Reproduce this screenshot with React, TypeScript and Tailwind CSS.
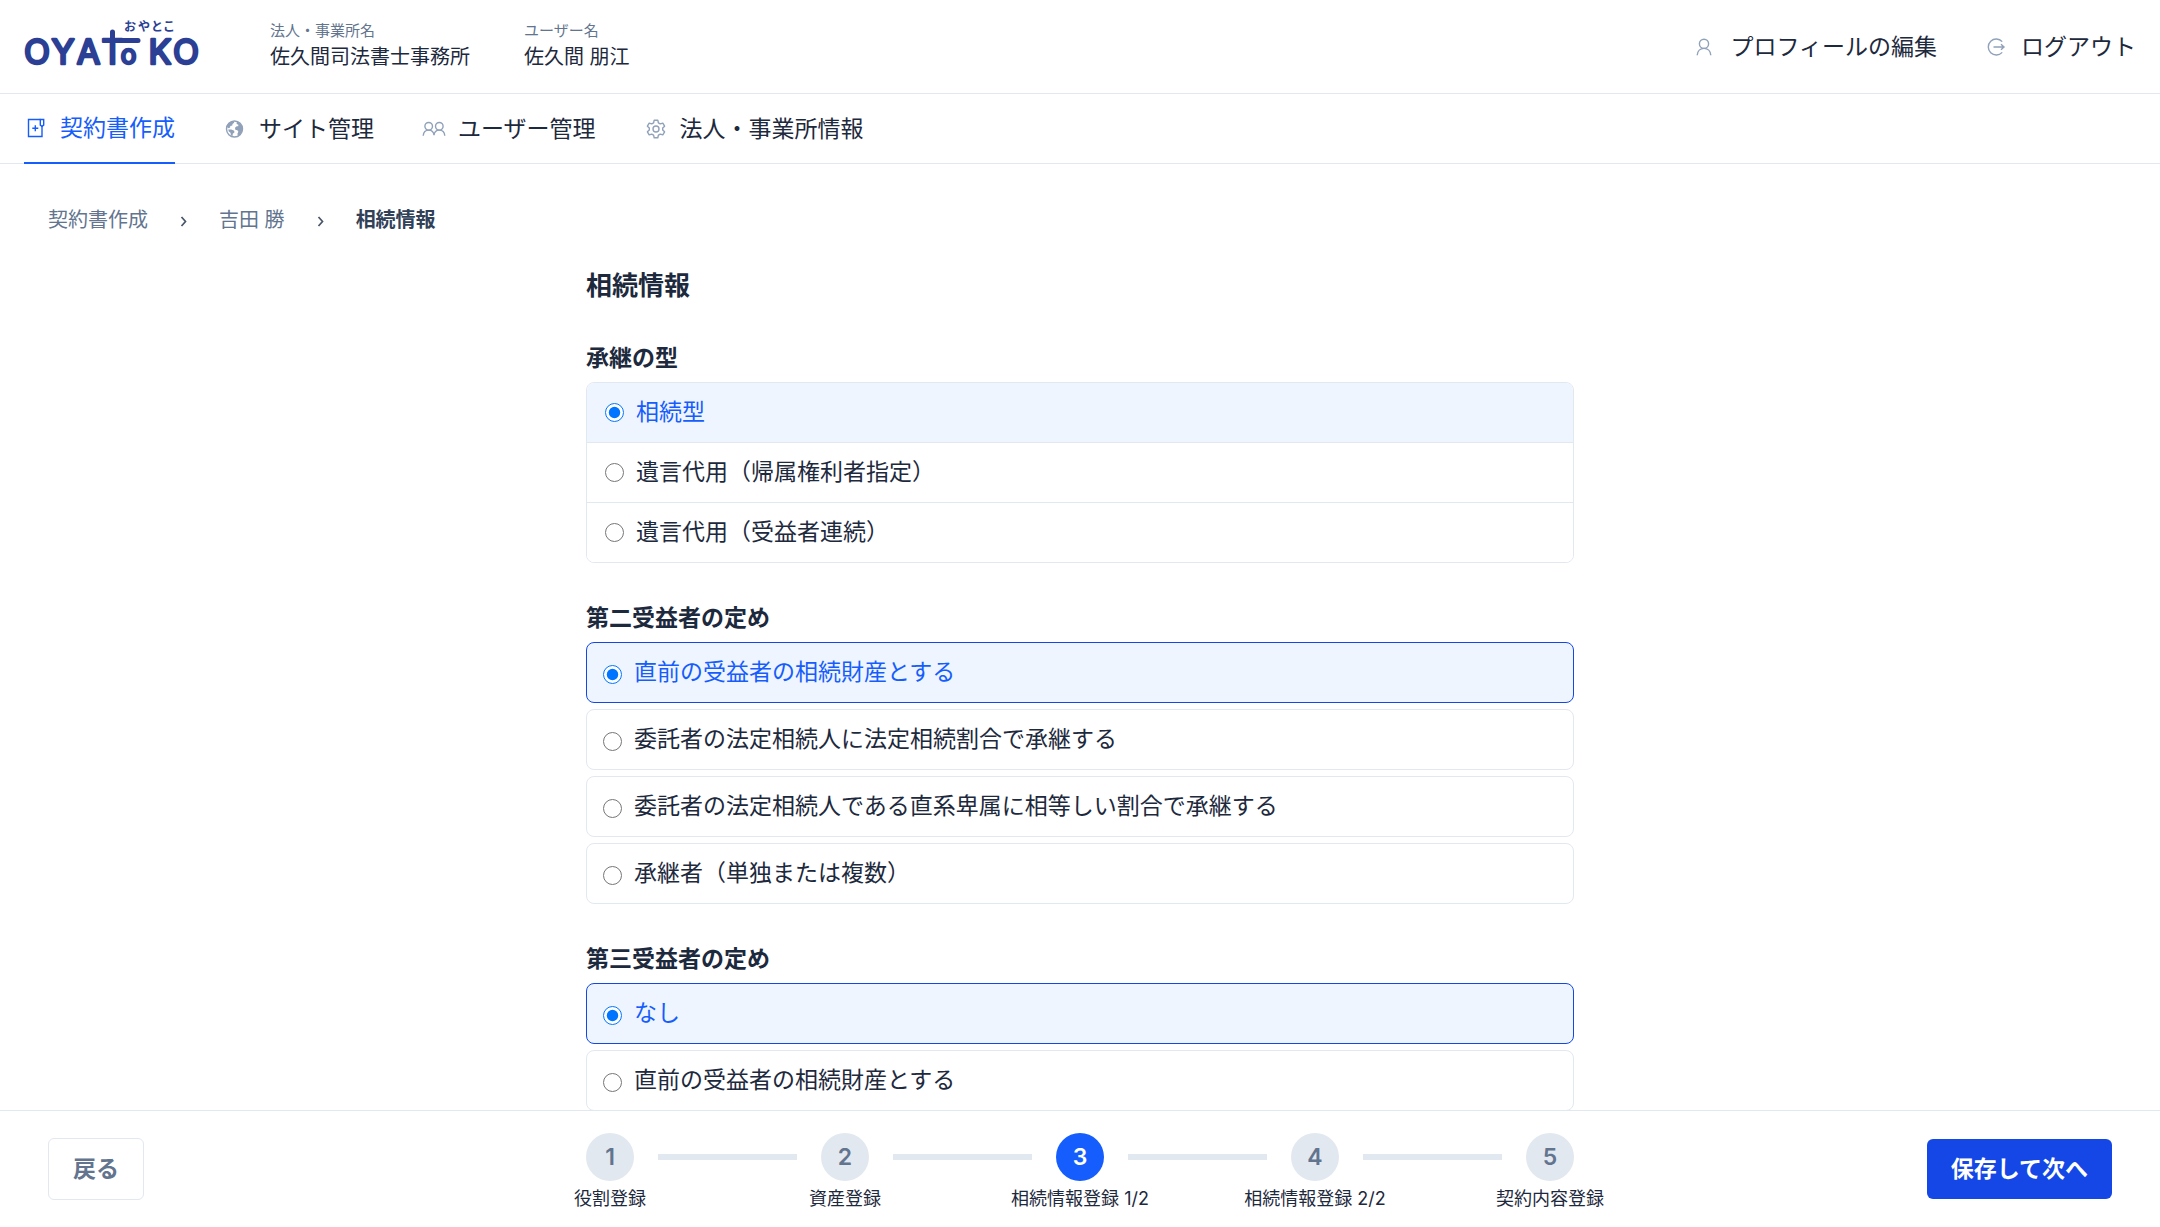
import { useState } from 'react';
import type { ReactNode } from 'react';

interface OptionGroupProps {
  name: string;
  title: string;
  options: string[];
  joined?: boolean;
}

const steps = ['役割登録', '資産登録', '相続情報登録 1/2', '相続情報登録 2/2', '契約内容登録'];
const currentStep = 3;

function Logo() {
  return (
    <svg width="180" height="57" viewBox="0 0 180 57" fill="#2b3f94" role="img" aria-label="OYAToKO おやとこ">
      <text
        x="13 39 64.5 88.5 104.5 136 162"
        y="46"
        textAnchor="middle"
        fontFamily="Inter, sans-serif"
        fontSize="34"
        stroke="#2b3f94"
        strokeWidth="2.6"
        strokeLinejoin="round"
      >
        OYA<tspan>T</tspan><tspan fontSize="26">o</tspan>KO
      </text>
      {/* crossbar runs on over the small o */}
      <path d="M88.5 14v10M98 22.5h16" stroke="#2b3f94" strokeWidth="5" strokeLinecap="round" fill="none" />
      <text
        x="106 120 133 145"
        y="13"
        textAnchor="middle"
        fontFamily="'Noto Sans CJK JP', sans-serif"
        fontSize="12"
        fontWeight="700"
      >
        おやとこ
      </text>
    </svg>
  );
}

function Icon({ children }: { children: ReactNode }) {
  return (
    <svg
      width="24"
      height="24"
      viewBox="0 0 24 24"
      fill="none"
      stroke="currentColor"
      strokeWidth="1.4"
      className="shrink-0"
      aria-hidden="true"
    >
      {children}
    </svg>
  );
}

function ContractIcon() {
  return (
    <Icon>
      <path d="M16.5 3.5H4.5v17h13.5V10" />
      <path d="M16.3 3.5h3.4v5.6l-1.7 1.3-1.7-1.3z" />
      <path d="M11.3 9.3v6M8.3 12.3h6" />
    </Icon>
  );
}

function GlobeIcon() {
  return (
    <Icon>
      <circle cx="11.5" cy="12" r="8" />
      <path
        d="M3.6 9.5C4.6 6.5 7.5 4.3 10.6 4.1l.6 1.700-1.700 1.300-.2 1.500-2 .5-.2 1.500-1.600.6z"
        fill="currentColor"
        stroke="none"
      />
      <path
        d="M5.2 12.6l3.200-.2 2.800 1.400.2 1.700-1.600 1.200-.3 2.300-1.500-.6-.5-2.600-1.700-1.200z"
        fill="currentColor"
        stroke="none"
      />
      <path
        d="M13.8 4.5c3 .9 5.300 3.500 5.600 6.600.2 2.600-.8 5.200-2.600 6.900l-2 1.100-.4-2.400 1-1.900-1-1.500-2.100-.5-.3-2 1.700-1.600 1.500.1.200-1.500-1.800-.9z"
        fill="currentColor"
        stroke="none"
      />
    </Icon>
  );
}

function UsersIcon() {
  return (
    <Icon>
      <circle cx="6.7" cy="9.3" r="3.8" />
      <circle cx="17.3" cy="9.3" r="3.8" />
      <path d="M1.2 18.8c.3-3.4 2.5-5.7 5.5-5.7s5 2.2 5.3 5.2c.3-3 2.3-5.2 5.3-5.2s5.2 2.3 5.5 5.7" />
    </Icon>
  );
}

function GearIcon() {
  return (
    <Icon>
      <circle cx="12" cy="12" r="3" />
      <path
        strokeLinejoin="round"
        d="M10.2 3.2h3.6l.6 2.6 1.9 1.1 2.5-.8 1.8 3.1-1.9 1.8v2l1.9 1.8-1.8 3.1-2.5-.8-1.9 1.1-.6 2.6h-3.6l-.6-2.6-1.9-1.1-2.5.8-1.8-3.1L5.3 13v-2L3.4 9.2l1.8-3.1 2.5.8 1.9-1.1z"
      />
    </Icon>
  );
}

function UserIcon() {
  return (
    <Icon>
      <circle cx="10" cy="8.8" r="4.6" />
      <path d="M3.2 20.2c.3-4 3-6.8 6.8-6.8s6.5 2.8 6.8 6.8" />
    </Icon>
  );
}

function LogoutIcon() {
  return (
    <Icon>
      <path d="M17.2 6.6A8 8 0 1 0 17.2 17.4" />
      <path d="M8.5 12h10M16 9.2l3 2.8-3 2.8" />
    </Icon>
  );
}

function Separator() {
  return (
    <svg width="23" height="20" viewBox="0 0 23 20" fill="none" stroke="#475569" strokeWidth="1.7" aria-hidden="true">
      <path d="M9.5 7l4 4.5-4 4.5" />
    </svg>
  );
}

function OptionGroup({ name, title, options, joined = false }: OptionGroupProps) {
  const [selected, setSelected] = useState(0);

  return (
    <fieldset className="mt-[39px]">
      <legend className="text-[23px] leading-8 font-bold">{title}</legend>
      <div
        className={
          joined
            ? 'mt-2 overflow-hidden rounded-lg border border-slate-200 divide-y divide-slate-200'
            : 'mt-2 flex flex-col gap-1.5'
        }
      >
        {options.map((option, i) => {
          const checked = selected === i;
          const frame = joined ? 'pl-[18px]' : `rounded-lg border pl-4 ${checked ? 'border-blue-700' : 'border-slate-200'}`;
          return (
            <label
              key={option}
              className={`flex items-center gap-3 py-3 pr-4 text-[23px] leading-[35px] ${frame} ${
                checked ? 'bg-[#eff5ff] text-blue-600' : 'bg-white'
              }`}
            >
              <input
                type="radio"
                name={name}
                checked={checked}
                onChange={() => setSelected(i)}
                className={`size-[19px] shrink-0 accent-[#0075ff] ${joined ? '' : 'mt-1'}`}
              />
              {option}
            </label>
          );
        })}
      </div>
    </fieldset>
  );
}

export default function App() {
  return (
    <div className="flex h-screen flex-col bg-white font-['Inter','Noto_Sans_CJK_JP',sans-serif] text-slate-800">
      {/* Header */}
      <header className="flex shrink-0 items-center justify-between border-b border-slate-200 px-6 py-[18px]">
        <div className="flex items-center">
          <a href="#home">
            <Logo />
          </a>
          <dl className="ml-[66px] flex gap-[54px]">
            <div>
              <dt className="text-[15px] leading-5 text-slate-500">法人・事業所名</dt>
              <dd className="text-xl leading-8">佐久間司法書士事務所</dd>
            </div>
            <div>
              <dt className="text-[15px] leading-5 text-slate-500">ユーザー名</dt>
              <dd className="text-xl leading-8">佐久間 朋江</dd>
            </div>
          </dl>
        </div>
        <div className="flex gap-12 text-[23px] leading-9">
          <a href="#profile" className="flex items-center gap-3">
            <span className="text-slate-400"><UserIcon /></span>
            プロフィールの編集
          </a>
          <a href="#logout" className="flex items-center gap-3">
            <span className="text-slate-400"><LogoutIcon /></span>
            ログアウト
          </a>
        </div>
      </header>

      {/* Navigation */}
      <nav className="flex shrink-0 gap-12 border-b border-slate-200 px-6 text-[23px] leading-9">
        <a href="#contracts" className="-mb-px flex items-center gap-3 border-b-2 border-blue-600 py-4 text-blue-600">
          <ContractIcon />
          契約書作成
        </a>
        <a href="#sites" className="flex items-center gap-3 py-4">
          <span className="text-slate-400"><GlobeIcon /></span>
          サイト管理
        </a>
        <a href="#users" className="flex items-center gap-3 py-4">
          <span className="text-slate-400"><UsersIcon /></span>
          ユーザー管理
        </a>
        <a href="#office" className="flex items-center gap-3 py-4">
          <span className="text-slate-400"><GearIcon /></span>
          法人・事業所情報
        </a>
      </nav>

      <main className="min-h-0 flex-1 overflow-y-auto px-12 pt-10 [scrollbar-width:none]">
        <div className="flex items-center gap-6 text-xl leading-8 text-slate-500">
          <a href="#contracts">契約書作成</a>
          <Separator />
          <a href="#client">吉田 勝</a>
          <Separator />
          <span className="font-bold text-slate-700">相続情報</span>
        </div>

        <form className="mx-auto mt-8 max-w-[988px]">
          <h1 className="text-[26px] leading-[35px] font-bold">相続情報</h1>
          <OptionGroup
            name="succession"
            title="承継の型"
            joined
            options={['相続型', '遺言代用（帰属権利者指定）', '遺言代用（受益者連続）']}
          />
          <OptionGroup
            name="second"
            title="第二受益者の定め"
            options={[
              '直前の受益者の相続財産とする',
              '委託者の法定相続人に法定相続割合で承継する',
              '委託者の法定相続人である直系卑属に相等しい割合で承継する',
              '承継者（単独または複数）',
            ]}
          />
          <OptionGroup name="third" title="第三受益者の定め" options={['なし', '直前の受益者の相続財産とする']} />
        </form>
      </main>

      {/* Footer */}
      <footer className="grid shrink-0 grid-cols-[1fr_minmax(0,988px)_1fr] items-center border-t border-slate-200 px-12">
        <button
          type="button"
          className="justify-self-start rounded-md border border-slate-200 px-6 py-3 text-[23px] leading-9 font-bold text-slate-500"
        >
          戻る
        </button>
        <ol className="flex pt-[22px] pb-4">
          {steps.map((step, i) => (
            <li key={step} className={`flex ${i < steps.length - 1 ? 'flex-1' : ''}`}>
              <div className="flex w-12 flex-col items-center gap-1.5">
                <span
                  className={`flex size-12 shrink-0 items-center justify-center rounded-full text-[23px] font-semibold ${
                    i + 1 === currentStep ? 'bg-[#155dfc] text-white' : 'bg-slate-200 text-slate-500'
                  }`}
                >
                  {i + 1}
                </span>
                <span className="text-lg leading-6 whitespace-nowrap">{step}</span>
              </div>
              {i < steps.length - 1 && <div className="mx-6 mt-[21px] h-1.5 flex-1 bg-slate-200" />}
            </li>
          ))}
        </ol>
        <button
          type="button"
          className="justify-self-end rounded-md bg-[#1447e6] px-6 py-3 text-[23px] leading-9 font-bold text-white"
        >
          保存して次へ
        </button>
      </footer>
    </div>
  );
}
